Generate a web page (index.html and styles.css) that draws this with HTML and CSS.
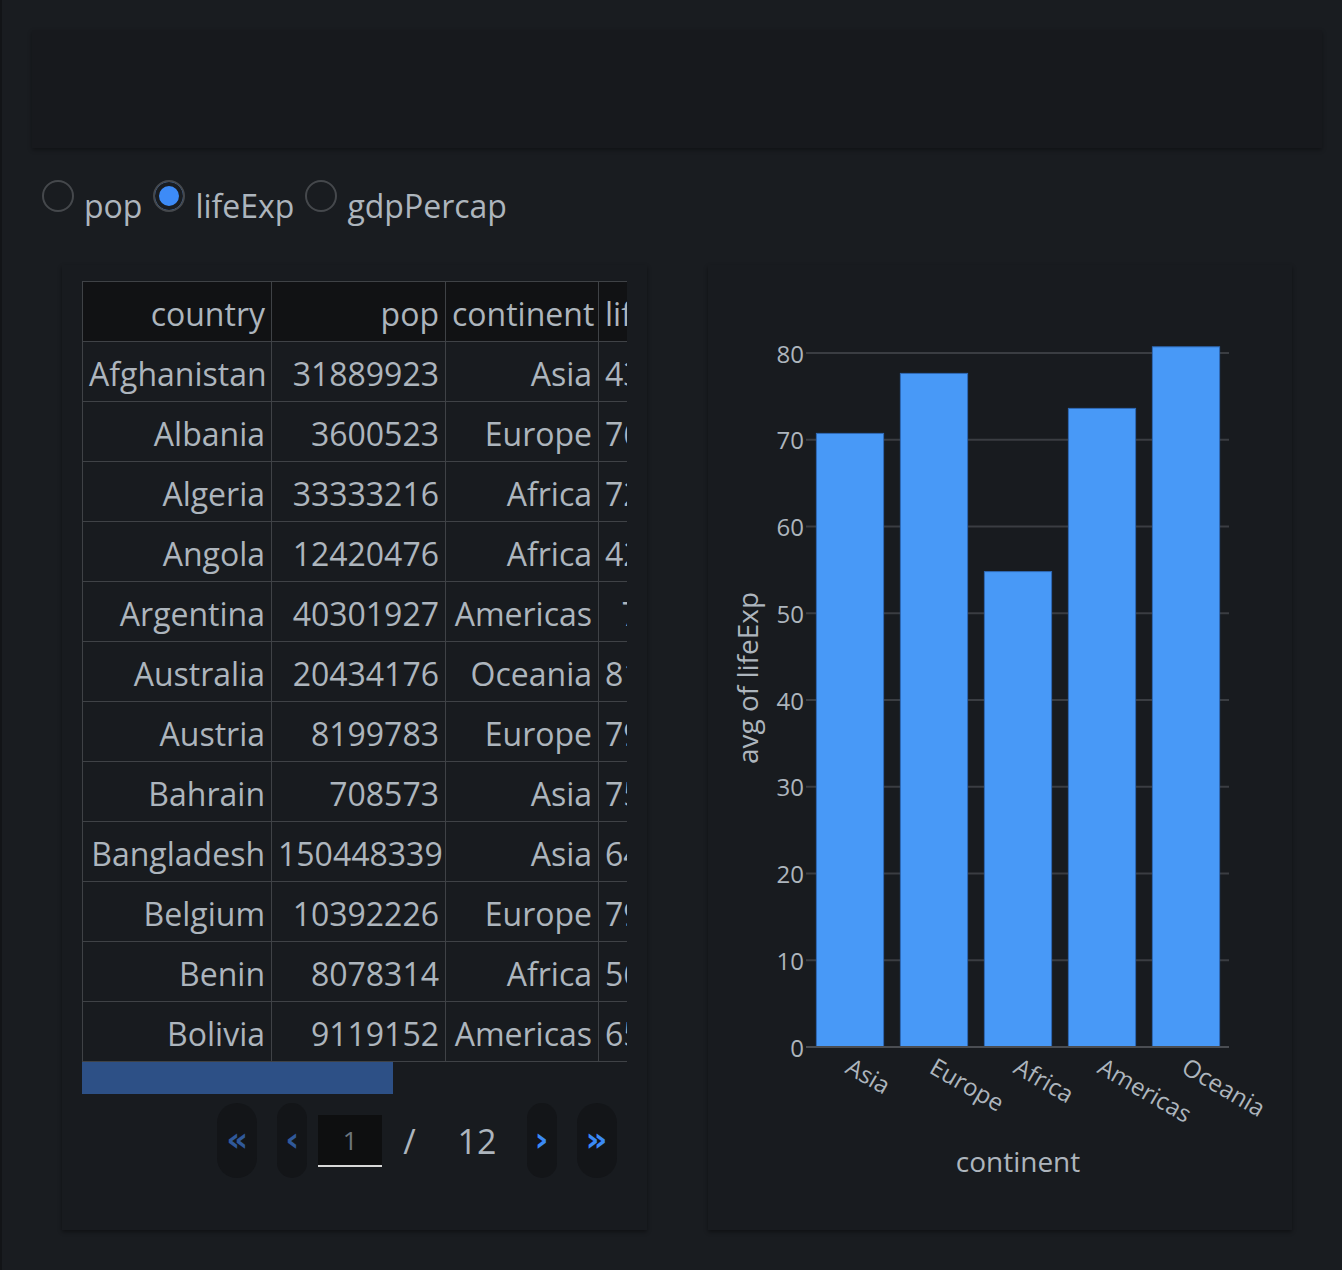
FILE: index.html
```html
<!DOCTYPE html>
<html lang="en">
<head>
    <meta charset="UTF-8" />
    <title>Gapminder 2007</title>
    <link rel="stylesheet" href="styles.css">
</head>
<body>
<div class="page">
    <div class="banner"></div>

    <div class="radios">
        <label class="radio"><input type="radio" name="col" value="pop" /><span>pop</span></label>
        <label class="radio"><input type="radio" name="col" value="lifeExp" checked /><span>lifeExp</span></label>
        <label class="radio"><input type="radio" name="col" value="gdpPercap" /><span>gdpPercap</span></label>
    </div>

    <div class="row">
        <div class="card table-card">
            <div class="table-wrap">
                <table class="data">
                    <colgroup>
                        <col class="c-country">
                        <col class="c-pop">
                        <col class="c-continent">
                        <col class="c-life">
                        <col class="c-gdp">
                    </colgroup>
                    <thead>
                        <tr><th>country</th><th>pop</th><th>continent</th><th>lifeExp</th><th>gdpPercap</th></tr>
                    </thead>
                    <tbody>
                        <tr><td>Afghanistan</td><td>31889923</td><td>Asia</td><td>43.828</td><td>974.5803384</td></tr>
                        <tr><td>Albania</td><td>3600523</td><td>Europe</td><td>76.423</td><td>5937.029526</td></tr>
                        <tr><td>Algeria</td><td>33333216</td><td>Africa</td><td>72.301</td><td>6223.367465</td></tr>
                        <tr><td>Angola</td><td>12420476</td><td>Africa</td><td>42.731</td><td>4797.231267</td></tr>
                        <tr><td>Argentina</td><td>40301927</td><td>Americas</td><td>75.32</td><td>12779.37964</td></tr>
                        <tr><td>Australia</td><td>20434176</td><td>Oceania</td><td>81.235</td><td>34435.36744</td></tr>
                        <tr><td>Austria</td><td>8199783</td><td>Europe</td><td>79.829</td><td>36126.4927</td></tr>
                        <tr><td>Bahrain</td><td>708573</td><td>Asia</td><td>75.635</td><td>29796.04834</td></tr>
                        <tr><td>Bangladesh</td><td>150448339</td><td>Asia</td><td>64.062</td><td>1391.253792</td></tr>
                        <tr><td>Belgium</td><td>10392226</td><td>Europe</td><td>79.441</td><td>33692.60508</td></tr>
                        <tr><td>Benin</td><td>8078314</td><td>Africa</td><td>56.728</td><td>1441.284873</td></tr>
                        <tr><td>Bolivia</td><td>9119152</td><td>Americas</td><td>65.554</td><td>3822.137084</td></tr>
                    </tbody>
                </table>
            </div>
            <div class="hscroll"><div class="hscroll-thumb"></div></div>

            <div class="pager">
                <button class="pg-btn wide" disabled>&laquo;</button>
                <button class="pg-btn" disabled>&lsaquo;</button>
                <input class="pg-input" type="text" value="1" />
                <span class="pg-sep">/</span>
                <span class="pg-total">12</span>
                <button class="pg-btn active">&rsaquo;</button>
                <button class="pg-btn wide active">&raquo;</button>
            </div>
        </div>

        <div class="card chart-card">
            <svg class="chart" width="584" height="965" viewBox="0 0 584 965">
                <g class="grid">
                    <line x1="98" x2="521" y1="695.25" y2="695.25" />
                    <line x1="98" x2="521" y1="608.5" y2="608.5" />
                    <line x1="98" x2="521" y1="521.75" y2="521.75" />
                    <line x1="98" x2="521" y1="435" y2="435" />
                    <line x1="98" x2="521" y1="348.25" y2="348.25" />
                    <line x1="98" x2="521" y1="261.5" y2="261.5" />
                    <line x1="98" x2="521" y1="174.75" y2="174.75" />
                    <line x1="98" x2="521" y1="88" y2="88" />
                </g>
                <g class="bars">
                    <rect x="108.4" y="168.4" width="67.2" height="613.6" />
                    <rect x="192.4" y="108.4" width="67.2" height="673.6" />
                    <rect x="276.4" y="306.6" width="67.2" height="475.4" />
                    <rect x="360.4" y="143.4" width="67.2" height="638.6" />
                    <rect x="444.4" y="81.8" width="67.2" height="700.2" />
                </g>
                <line class="zero" x1="98" x2="521" y1="782" y2="782" />
                <g class="yticks">
                    <text x="96" y="782">0</text>
                    <text x="96" y="695.25">10</text>
                    <text x="96" y="608.5">20</text>
                    <text x="96" y="521.75">30</text>
                    <text x="96" y="435">40</text>
                    <text x="96" y="348.25">50</text>
                    <text x="96" y="261.5">60</text>
                    <text x="96" y="174.75">70</text>
                    <text x="96" y="88">80</text>
                </g>
                <g class="xticks">
                    <text transform="translate(136 807) rotate(30)">Asia</text>
                    <text transform="translate(220 807) rotate(30)">Europe</text>
                    <text transform="translate(304 807) rotate(30)">Africa</text>
                    <text transform="translate(388 807) rotate(30)">Americas</text>
                    <text transform="translate(472 807) rotate(30)">Oceania</text>
                </g>
                <text class="axis-title" x="310" y="907">continent</text>
                <text class="axis-title" transform="translate(50 413) rotate(-90)">avg of lifeExp</text>
            </svg>
        </div>
    </div>
</div>
</body>
</html>
```

FILE: styles.css
```css
body {
    margin: 0;
    background: #191c20;
    font-family: 'Open Sans', 'Noto Sans', sans-serif;
    color: #adb5bd;
}

.page {
    border-left: 2px solid #121417;
    padding: 30px 20px 40px 30px;
    min-height: 1200px;
}

.banner {
    height: 118px;
    background: #17191d;
    box-shadow: 0 2px 4px rgba(0, 0, 0, 0.35);
}

/* radio buttons */
.radios {
    display: flex;
    align-items: flex-start;
    margin: 32px 0 37px;
    padding-left: 10px;
    height: 48px;
}

.radio {
    display: flex;
    align-items: flex-start;
    font-size: 32px;
    margin-right: 11px;
}

.radio span {
    padding-top: 4px;
}

.radio input {
    appearance: none;
    -webkit-appearance: none;
    width: 32px;
    height: 32px;
    margin: 0 10px 0 0;
    border: 2px solid #45484c;
    border-radius: 50%;
    box-sizing: border-box;
    background: transparent;
}

.radio input:checked {
    background: #3d8bf7;
    box-shadow: inset 0 0 0 4px #1a1d21;
}

/* cards */
.row {
    display: grid;
    grid-template-columns: minmax(0, 1fr) minmax(0, 1fr);
    gap: 61px;
    padding: 0 30px;
}

.card {
    background: #181b1f;
    box-shadow: 0 2px 4px rgba(0, 0, 0, 0.4);
    height: 965px;
    box-sizing: border-box;
    min-width: 0;
}

.table-card {
    padding: 16px 20px 0;
}

/* table */
.table-wrap {
    overflow: hidden;
}

.hscroll {
    height: 32px;
}

.hscroll-thumb {
    width: 311px;
    height: 100%;
    background: #2d5086;
}

.data {
    border-collapse: collapse;
    table-layout: fixed;
    width: 955px;
    font-size: 32px;
}

.c-country { width: 189px; }
.c-pop { width: 174px; }
.c-continent { width: 153px; }
.c-life { width: 111px; }
.c-gdp { width: 328px; }

.data th,
.data td {
    height: 60px;
    padding: 3px 6px 0;
    box-sizing: border-box;
    border: 1px solid #3f4246;
    text-align: right;
    white-space: nowrap;
    font-weight: normal;
    color: #adb5bd;
}

.data th {
    background: #111214;
}

.data td {
    background: #181b1f;
}

/* pagination */
.pager {
    display: flex;
    align-items: center;
    justify-content: flex-end;
    padding-right: 10px;
    margin-top: 9px;
}

.pg-btn {
    height: 75px;
    width: 30px;
    border: none;
    border-radius: 16px;
    background: #131518;
    color: #3b8af5;
    font-family: 'DejaVu Sans', sans-serif;
    font-weight: bold;
    font-size: 34px;
    line-height: 1;
    padding: 0 0 4px;
    margin-left: 20px;
}

.pg-btn.wide {
    width: 40px;
    border-radius: 20px;
}

.pg-btn:disabled {
    color: #30599a;
}

.pg-btn:first-child {
    margin-left: 0;
}

.pg-input {
    width: 64px;
    height: 52px;
    box-sizing: border-box;
    margin-left: 11px;
    border: none;
    border-bottom: 2px solid #d8d8d8;
    background: #0e0f10;
    color: #6c757d;
    font-family: 'Open Sans', sans-serif;
    font-size: 26px;
    text-align: center;
    padding: 0;
}

.pg-sep {
    font-size: 34px;
    margin: 0 42px 0 21px;
}

.pg-total {
    font-size: 34px;
    margin-right: 10px;
}

/* chart */
.chart {
    display: block;
    font-family: 'Open Sans', sans-serif;
}

.grid line {
    stroke: #3a3d42;
    stroke-width: 2;
}

.zero {
    stroke: #4a4d52;
    stroke-width: 2;
}

.bars rect {
    fill: #4899f7;
    stroke: #2f69b5;
    stroke-width: 1;
}

.yticks text {
    fill: #adb5bd;
    font-size: 24px;
    text-anchor: end;
    dominant-baseline: central;
}

.xticks text {
    fill: #adb5bd;
    font-size: 24px;
}

.axis-title {
    fill: #adb5bd;
    font-size: 28px;
    text-anchor: middle;
}
```
